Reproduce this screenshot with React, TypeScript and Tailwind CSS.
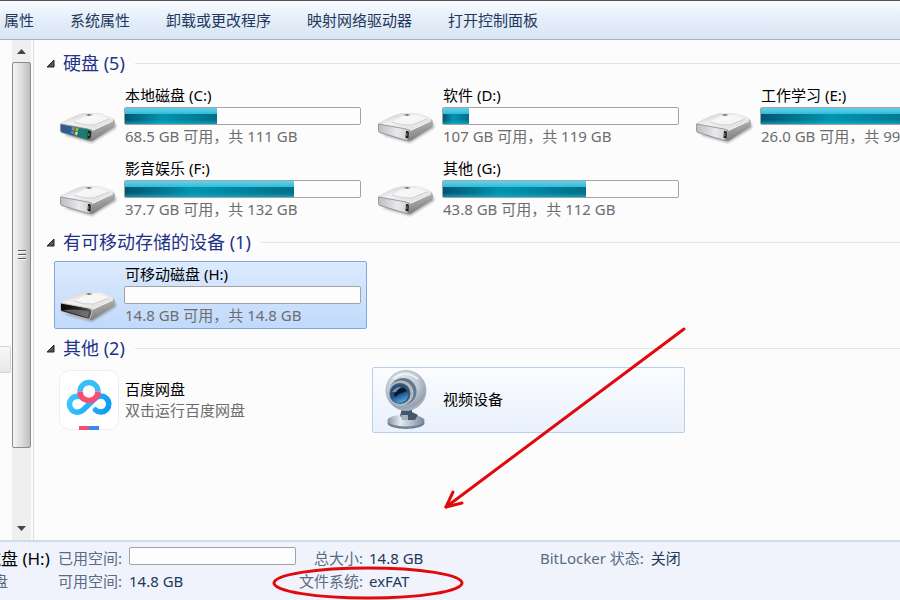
import React from "react";

type DriveKind = "system" | "fixed" | "removable";

interface Drive {
  name: string;
  detail: string;
  used: number;
  kind: DriveKind;
}

const commands = ["属性", "系统属性", "卸载或更改程序", "映射网络驱动器", "打开控制面板"];

const hardDrives: Drive[] = [
  { name: "本地磁盘 (C:)", detail: "68.5 GB 可用，共 111 GB", used: 39, kind: "system" },
  { name: "软件 (D:)", detail: "107 GB 可用，共 119 GB", used: 11, kind: "fixed" },
  { name: "工作学习 (E:)", detail: "26.0 GB 可用，共 99.0 GB", used: 74, kind: "fixed" },
  { name: "影音娱乐 (F:)", detail: "37.7 GB 可用，共 132 GB", used: 72, kind: "fixed" },
  { name: "其他 (G:)", detail: "43.8 GB 可用，共 112 GB", used: 61, kind: "fixed" },
];

function DriveIcon({ kind }: { kind: DriveKind }) {
  const id = (part: string) => `${kind}-${part}`;
  return (
    <svg width="60" height="36" viewBox="0 0 60 36" aria-hidden="true" className="shrink-0">
      <defs>
        <linearGradient id={id("top")} x1="0" y1="0" x2="1" y2="1">
          <stop offset="0" stopColor="#bdbdbd" />
          <stop offset="0.4" stopColor="#f2f2f2" />
          <stop offset="1" stopColor="#dadada" />
        </linearGradient>
        <linearGradient id={id("side")} x1="0" y1="0" x2="0.5" y2="1">
          <stop offset="0" stopColor="#e2e2e2" />
          <stop offset="0.5" stopColor="#bcbcbc" />
          <stop offset="1" stopColor="#828282" />
        </linearGradient>
        <linearGradient id={id("front")} x1="0" y1="0" x2="1" y2="0">
          {kind === "system" && (
            <>
              <stop offset="0" stopColor="#3a5584" />
              <stop offset="0.35" stopColor="#1f649f" />
              <stop offset="0.7" stopColor="#1b7c74" />
              <stop offset="1" stopColor="#1c6f52" />
            </>
          )}
          {kind === "fixed" && (
            <>
              <stop offset="0" stopColor="#bebec2" />
              <stop offset="0.6" stopColor="#e9e9ed" />
              <stop offset="1" stopColor="#cacace" />
            </>
          )}
          {kind === "removable" && (
            <>
              <stop offset="0" stopColor="#0a0a0a" />
              <stop offset="0.5" stopColor="#1e1e1e" />
              <stop offset="1" stopColor="#5e5e5e" />
            </>
          )}
        </linearGradient>
        <filter id={id("soft")} x="-20%" y="-40%" width="140%" height="180%">
          <feGaussianBlur stdDeviation="1.3" />
        </filter>
      </defs>
      <path d="M5 23 L33 31 L57 16 L57 12 L50 10 Z" fill="#777" opacity="0.55" filter={`url(#${id("soft")})`} />
      <path d="M2 11 Q12 5 20 2.500 Q24 1 28 1 L42 1.500 L53 6 Q56 7.500 56 11 L55 15 L35 28 Q33 29.500 29 28.500 L3 21 Q1 20 1 18 L1 13 Z" fill={`url(#${id("side")})`} />
      <path d="M2 11 Q12 5 20 2.500 Q24 1 28 1 L42 1.500 L53 6 Q56 7.500 53 9 L37 17 Q34 18.500 31 17.500 L4 12 Z" fill={`url(#${id("top")})`} />
      <path d="M15 10 L27 3.500 Q38 2 50 6.500 L35 13 Q25 14 15 10 Z" fill="#fbfbfb" opacity="0.6" />
      <path d="M15 10 Q25 14 35 13 L50 7" fill="none" stroke="#c6c6c6" strokeWidth="0.8" />
      <path d="M26.500 3 L30 2 L33.500 3 L30 4 Z" fill="#747474" />
      <path d="M33 18.500 L54 9" stroke="#f6f6f6" strokeWidth="1" />
      <path
        d="M1.500 12 L29 17 Q33.500 18 33 21 L31 27.500 Q30.500 28.500 28 28 L3 20.500 Q1.500 20 1.500 18 Z"
        fill={`url(#${id("front")})`}
        stroke={kind === "removable" ? "#d9d9d9" : "#8f8f8f"}
        strokeWidth="0.8"
      />
      {kind !== "removable" && (
        <>
          <path d="M29 19 Q32 18.500 32 20.500 L31.500 26.500 L28.500 26 Z" fill="#182218" />
          <path d="M30 21 L29.700 24" stroke="#6aa35c" strokeWidth="1" />
        </>
      )}
      {kind === "removable" && (
        <path d="M4 19.500 Q15 17 30 20.500 L28.500 26.500 Z" fill="#8c8c8c" opacity="0.6" />
      )}
      {kind === "system" && (
        <>
          <path d="M13.500 15 Q15 14.500 16 15.500 L15.500 18.500 L12.500 18 Z" fill="#ee742d" />
          <path d="M17 15.500 L19.500 16 L19 19.500 L16.500 19 Z" fill="#86c444" />
          <path d="M12.500 19 L15 19.500 L14.500 22 L12 21 Z" fill="#4d9be6" />
          <path d="M16.500 19.800 L19 20 L18 23.500 L15.500 22.500 Z" fill="#fbd12e" />
        </>
      )}
    </svg>
  );
}

function CapacityBar({ used, label }: { used: number; label: string }) {
  return (
    <div
      role="meter"
      aria-label={label}
      aria-valuemin={0}
      aria-valuemax={100}
      aria-valuenow={used}
      className="h-[18px] w-full rounded-xs border border-[#a3a3a3] bg-[#fdfdfd]"
    >
      {used > 0 && (
        <div className="relative h-full bg-linear-to-b from-[#5fd3ec] via-[#38bbd8] via-35% to-[#079fba]" style={{ width: `${used}%` }}>
          <div className="absolute inset-x-0 top-[6px] bottom-0 bg-linear-to-r from-[#005670] via-[#0095b0] via-40% to-[#006f8a]" />
          <div className="absolute inset-x-0 bottom-0 h-[4px] bg-linear-to-t from-[#22b6cf]/60 to-transparent" />
        </div>
      )}
    </div>
  );
}

function DriveItem({ drive, selected = false }: { drive: Drive; selected?: boolean }) {
  return (
    <button
      type="button"
      className={`flex h-[68px] items-start rounded-xs border pr-[5px] pl-1 text-left ${
        selected ? "border-[#84a8d6] bg-linear-to-b from-[#dceafd] to-[#c1dafb]" : "border-transparent"
      }`}
    >
      <span className="mt-[29px] flex w-[65px] shrink-0">
        <DriveIcon kind={drive.kind} />
      </span>
      <span className="block min-w-0 flex-1 pt-[2px] whitespace-nowrap">
        <span className="block pl-px leading-5 text-black">{drive.name}</span>
        <span className="mt-[2px] block">
          <CapacityBar used={drive.used} label={drive.name} />
        </span>
        <span className="mt-px block pl-px leading-5 text-[#6d6d6d]">{drive.detail}</span>
      </span>
    </button>
  );
}

function Group({ title, count, children }: { title: string; count: number; children: React.ReactNode }) {
  return (
    <section className="flex flex-col gap-[5px]">
      <button type="button" className="flex h-7 items-center pl-3 text-left">
        <svg width="9" height="9" viewBox="0 0 9 9" aria-hidden="true" className="shrink-0">
          <path d="M8 1 L8 8 L1 8 Z" fill="#555" stroke="#262626" strokeWidth="1" />
        </svg>
        <span className="ml-2 text-lg leading-7 whitespace-nowrap text-[#1e3287]">
          {title} ({count})
        </span>
        <span className="ml-[10px] h-px flex-1 bg-[#e1e4ea]" />
      </button>
      <div className="grid grid-cols-[repeat(3,313px)] gap-[5px] pl-5">{children}</div>
    </section>
  );
}

function NetdiskIcon() {
  return (
    <svg width="60" height="60" viewBox="0 0 60 60" aria-hidden="true">
      <defs>
        <linearGradient id="disk-blue" gradientUnits="userSpaceOnUse" x1="8" y1="20" x2="53" y2="40">
          <stop offset="0" stopColor="#41ccfd" />
          <stop offset="1" stopColor="#0a98f8" />
        </linearGradient>
      </defs>
      <rect x="0.5" y="0.500" width="59" height="59" rx="10" fill="#fff" stroke="#eeeeee" />
      <g fill="none" strokeWidth="5.500" strokeLinecap="round">
        <path
          d="M36.500 40 A8 8 0 1 0 36 28.500 L24 40 A8 8 0 1 1 24 28.500"
          stroke="url(#disk-blue)"
          strokeLinejoin="round"
        />
        <path d="M21 21.500 A9 9 0 0 1 39 21.500" stroke="#3abefa" strokeLinecap="butt" />
        <path d="M21 21.500 A9 9 0 0 0 39 21.500" stroke="#fa4d70" strokeLinecap="butt" />
      </g>
      <path d="M20 56 H30 V60 H20 Z" fill="#f24e70" />
      <path d="M30 56 H40 V60 H30 Z" fill="#338af0" />
    </svg>
  );
}

function WebcamIcon() {
  return (
    <svg width="60" height="62" viewBox="0 0 60 62" aria-hidden="true">
      <defs>
        <radialGradient id="cam-body" cx="0.4" cy="0.3" r="0.75">
          <stop offset="0" stopColor="#e6ebf1" />
          <stop offset="0.55" stopColor="#c0c8d2" />
          <stop offset="0.85" stopColor="#96a2b0" />
          <stop offset="1" stopColor="#b4bec9" />
        </radialGradient>
        <linearGradient id="cam-base" x1="0" y1="0" x2="1" y2="0">
          <stop offset="0" stopColor="#8494a5" />
          <stop offset="0.35" stopColor="#e4ebf2" />
          <stop offset="0.7" stopColor="#aab7c5" />
          <stop offset="1" stopColor="#75869a" />
        </linearGradient>
        <linearGradient id="cam-lens" x1="0.3" y1="0" x2="0.7" y2="1">
          <stop offset="0" stopColor="#2c4866" />
          <stop offset="0.5" stopColor="#1a4f88" />
          <stop offset="1" stopColor="#4fb2f4" />
        </linearGradient>
      </defs>
      <ellipse cx="29" cy="54" rx="18.500" ry="6" fill="#718194" />
      <ellipse cx="29" cy="51.500" rx="18.500" ry="6" fill="url(#cam-base)" />
      <path d="M25 39 H35 V43 L41 46 L38 51 H28 L23 47 Z" fill="#46566a" />
      <path d="M24 46 L31 46 L31 51 L25 51 Z" fill="#a5b2c0" />
      <circle cx="29" cy="21.500" r="20" fill="url(#cam-body)" stroke="#a5b0bc" strokeWidth="0.8" />
      <path d="M16 10 Q28 0 41 10" fill="none" stroke="#fff" strokeWidth="2" opacity="0.7" />
      <circle cx="26" cy="22.500" r="13.500" fill="#66778c" />
      <circle cx="24" cy="24" r="12.500" fill="#aebbc8" />
      <circle cx="23" cy="24.500" r="10.500" fill="#3f546d" />
      <circle cx="22.500" cy="25" r="9" fill="url(#cam-lens)" />
      <path d="M15 23 Q18 18 24 17.500 L19 23 Z" fill="#6e93b8" />
      <path d="M17 25 L22 20 L27 19 L30 22 L22 25 L18 28 Z" fill="#0d1620" />
    </svg>
  );
}

function SideScrollbar() {
  return (
    <div className="flex w-[19px] shrink-0 flex-col items-center bg-[#efefef]" role="scrollbar" aria-controls="items" aria-valuenow={0}>
      <button type="button" aria-label="向上滚动" className="flex h-[22px] w-full items-center justify-center">
        <svg width="9" height="5" viewBox="0 0 9 5" aria-hidden="true">
          <path d="M0 5 L4.500 0 L9 5 Z" fill="#444" />
        </svg>
      </button>
      <div className="flex w-full flex-[386] flex-col items-center justify-center gap-[2px] rounded-xs border border-[#8c8c8c] bg-linear-to-r from-[#f4f4f4] via-[#dedede] via-50% to-[#bebebe]">
        <span className="h-[2px] w-2 border-b border-white bg-[#555]" />
        <span className="h-[2px] w-2 border-b border-white bg-[#555]" />
        <span className="h-[2px] w-2 border-b border-white bg-[#555]" />
      </div>
      <div className="flex-[68]" />
      <button type="button" aria-label="向下滚动" className="flex h-[24px] w-full items-center justify-center">
        <svg width="9" height="5" viewBox="0 0 9 5" aria-hidden="true">
          <path d="M0 0 L4.500 5 L9 0 Z" fill="#444" />
        </svg>
      </button>
    </div>
  );
}

function Annotations() {
  return (
    <svg className="pointer-events-none absolute top-0 left-0" width="900" height="600" viewBox="0 0 900 600" aria-hidden="true">
      <g fill="none" stroke="#e00a0c" strokeWidth="3" strokeLinecap="round" strokeLinejoin="round">
        <path d="M684 329 L446 507" />
        <path d="M453 492 L446 507 L462 503" />
        <ellipse cx="368" cy="583" rx="94" ry="15" />
      </g>
    </svg>
  );
}

export default function App() {
  return (
    <div className="relative flex h-screen flex-col overflow-hidden bg-[#fcfcfc] font-['Noto_Sans','Noto_Sans_CJK_SC',sans-serif] text-[15px]">
      <nav className="flex h-10 shrink-0 items-center gap-9 border-t border-b border-t-[#4d525c] border-b-[#a3b4cb] bg-linear-to-b from-[#fafcff] via-[#e4edf9] via-50% to-[#dae6f5] pl-1 whitespace-nowrap text-[#1e395b]">
        {commands.map((command) => (
          <button key={command} type="button" className="leading-5">
            {command}
          </button>
        ))}
      </nav>

      <div className="flex min-h-0 flex-1">
        <aside className="w-3 shrink-0 pt-[306px]">
          <div className="h-[27px] w-[11px] rounded-r-xs border border-l-0 border-[#d5d5d5] bg-linear-to-b from-[#f8f8f8] to-[#e7e7e7]" />
        </aside>
        <SideScrollbar />
        <main id="items" className="ml-[2px] flex min-w-0 flex-1 flex-col gap-[5px] overflow-hidden border-l border-[#d3dfed] pt-[9px]">
          <Group title="硬盘" count={5}>
            {hardDrives.map((drive) => (
              <DriveItem key={drive.name} drive={drive} />
            ))}
          </Group>
          <Group title="有可移动存储的设备" count={1}>
            <DriveItem drive={{ name: "可移动磁盘 (H:)", detail: "14.8 GB 可用，共 14.8 GB", used: 0, kind: "removable" }} selected />
          </Group>
          <Group title="其他" count={2}>
            <button type="button" className="flex h-[66px] items-center gap-[6px] rounded-xs border border-transparent pl-1 text-left">
              <NetdiskIcon />
              <span className="leading-[21px]">
                <span className="block text-black">百度网盘</span>
                <span className="block text-[#6d6d6d]">双击运行百度网盘</span>
              </span>
            </button>
            <button type="button" className="flex h-[66px] items-center gap-[6px] rounded-xs border border-[#b8d0ec] bg-linear-to-b from-[#fafcfe] to-[#e9f1fc] pl-1 text-left">
              <WebcamIcon />
              <span className="pb-[2px] leading-[21px] text-black">视频设备</span>
            </button>
          </Group>
        </main>
      </div>

      <footer className="flex h-[60px] shrink-0 border-t-2 border-[#d2dce8] bg-[#f0f3fb] pt-[5px] leading-[23px] whitespace-nowrap text-[#5a6b84]">
        <div className="-ml-[67px] w-[125px] shrink-0">
          <div className="text-[17px] leading-[23px] text-black">可移动磁盘 (H:)</div>
          <div>可移动磁盘</div>
        </div>
        <dl className="grid w-[238px] shrink-0 grid-cols-[64px_1fr] content-start gap-x-[7px]">
          <dt>已用空间:</dt>
          <dd className="w-[167px]">
            <CapacityBar used={0} label="已用空间" />
          </dd>
          <dt>可用空间:</dt>
          <dd className="text-[#1e395b]">14.8 GB</dd>
        </dl>
        <dl className="grid w-[244px] shrink-0 grid-cols-[67px_1fr] content-start gap-x-[6px]">
          <dt className="text-right">总大小:</dt>
          <dd className="text-[#1e395b]">14.8 GB</dd>
          <dt className="text-right">文件系统:</dt>
          <dd className="text-[#1e395b]">exFAT</dd>
        </dl>
        <dl className="flex gap-[7px]">
          <dt>BitLocker 状态:</dt>
          <dd className="text-[#1e395b]">关闭</dd>
        </dl>
      </footer>

      <Annotations />
    </div>
  );
}
